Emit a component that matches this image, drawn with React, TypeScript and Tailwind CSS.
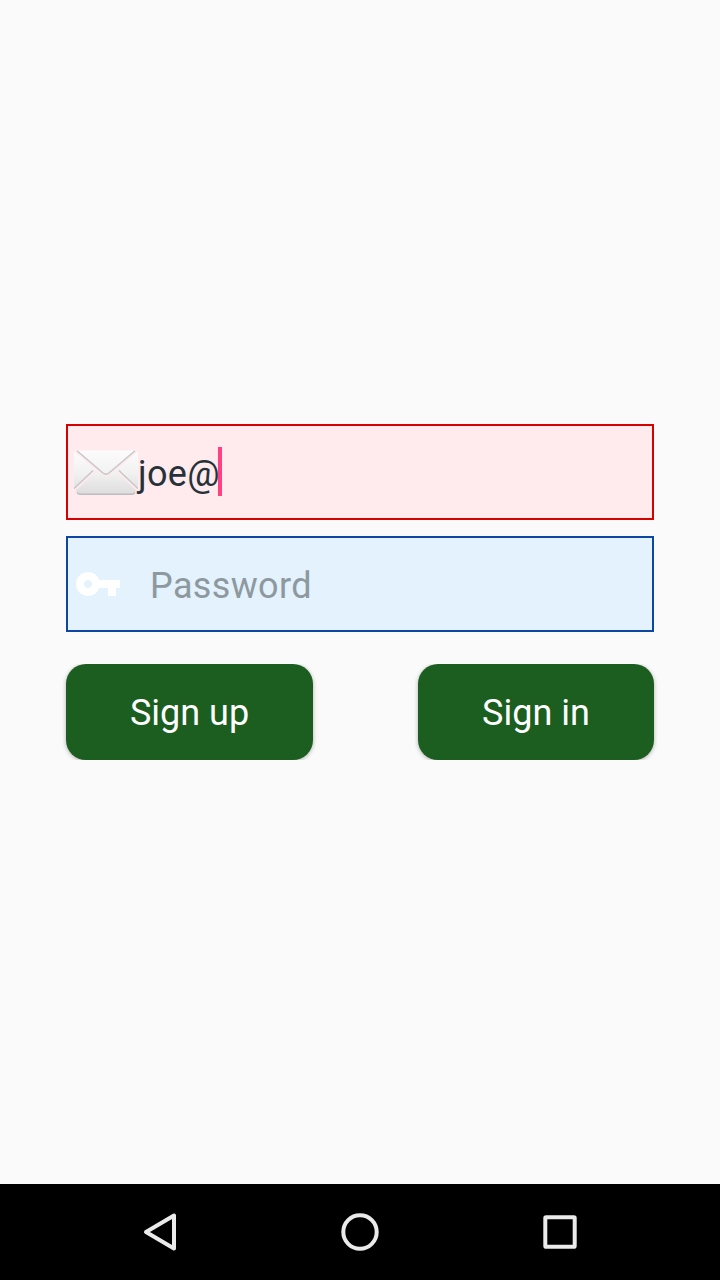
function EnvelopeIcon() {
  return (
    <svg className="h-[64px] w-[64px] shrink-0" viewBox="0 0 64 64" fill="none">
      <defs>
        <linearGradient id="paper" x1="0" y1="10" x2="0" y2="55" gradientUnits="userSpaceOnUse">
          <stop offset="0" stopColor="#fcfcfc" />
          <stop offset="0.5" stopColor="#f2f2f2" />
          <stop offset="1" stopColor="#dcdcdc" />
        </linearGradient>
      </defs>
      <path d="M0 10.5H64V49L60 54.5H4L0 49Z" fill="url(#paper)" />
      <path d="M0 10.2L29 34.6Q32 37 35 34.6L64 10.2" stroke="#ffe9ec" strokeWidth="1.7" />
      <path d="M21 31.2L0.5 50.6L4 54.6M43 31.2L63.5 50.6L60 54.6" stroke="#ffe9ec" strokeWidth="1.8" />
      <path d="M3 10.8L29 33Q32 35.4 35 33L61 10.8" stroke="#c6c6c6" strokeWidth="1.4" />
      <path d="M19 30.5L0 48.6M45 30.5L64 48.6" stroke="#c6c6c6" strokeWidth="1.4" />
      <path d="M3 52.3Q4 54.2 6.5 54.2H57.5Q60 54.2 61 52.3" stroke="#bdbdbd" strokeWidth="1.4" />
    </svg>
  );
}

function KeyIcon() {
  return (
    <svg className="h-12 w-12 shrink-0" viewBox="0 0 24 24" fill="white">
      <path d="M12.65 10C11.83 7.67 9.61 6 7 6c-3.31 0-6 2.69-6 6s2.69 6 6 6c2.61 0 4.83-1.67 5.65-4H17v4h4v-4h2v-4H12.65zM7 14c-1.1 0-2-.9-2-2s.9-2 2-2 2 .9 2 2-.9 2-2 2z" />
    </svg>
  );
}

function NavigationBar() {
  return (
    <nav className="flex h-24 items-center justify-center gap-[152px] bg-black">
      <svg className="size-12" viewBox="0 0 48 48" fill="none" stroke="#ebebeb" strokeWidth="4" strokeLinejoin="round">
        <path d="M38 7.5V40.5L10 24Z" />
      </svg>
      <svg className="size-12" viewBox="0 0 48 48" fill="none" stroke="#ebebeb" strokeWidth="4">
        <circle cx="24" cy="24" r="16.7" />
      </svg>
      <svg className="size-12" viewBox="0 0 48 48" fill="none" stroke="#ebebeb" strokeWidth="4" strokeLinejoin="round">
        <rect x="9.3" y="9.3" width="29.4" height="29.4" rx="0.8" />
      </svg>
    </nav>
  );
}

export default function App() {
  return (
    <div className="flex h-[1280px] w-[720px] flex-col bg-[#fafafa] font-['Roboto',sans-serif] text-[36px] leading-[42px]">
      <main className="flex grow flex-col justify-center px-[66px]">
        <div className="flex h-24 items-center border-2 border-[#d50000] bg-[#ffebee] pl-1.5 text-[#263238]">
          <EnvelopeIcon />
          <span className="mt-1 w-20 tracking-[0.3px]">joe@</span>
          <span className="mb-0.5 h-[49px] w-1 bg-[#ff4081]" />
        </div>
        <div className="mt-4 flex h-24 items-center border-2 border-[#0d47a1] bg-[#e3f2fd] pl-1.5 text-[#8d989f]">
          <KeyIcon />
          <span className="mt-1 ml-7 tracking-[0.36px]">Password</span>
        </div>
        <div className="-mx-2 mt-8 flex h-24 justify-between overflow-clip px-2">
          <button className="w-[247px] rounded-[20px] bg-[#1b5e20] pt-0.5 text-white shadow-[0_1px_4px_rgba(0,0,0,0.3)]">
            Sign up
          </button>
          <button className="w-[236px] rounded-[20px] bg-[#1b5e20] pt-0.5 text-white shadow-[0_1px_4px_rgba(0,0,0,0.3)]">
            Sign in
          </button>
        </div>
      </main>
      <NavigationBar />
    </div>
  );
}
